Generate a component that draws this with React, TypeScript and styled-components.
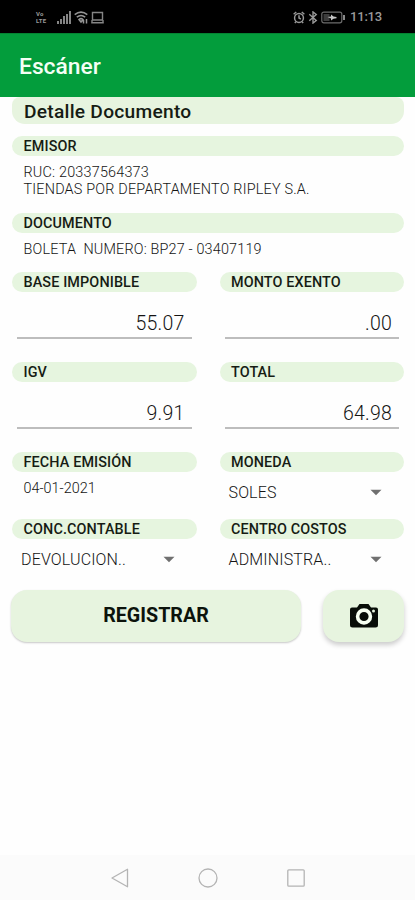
import React from 'react';
import styled, { createGlobalStyle } from 'styled-components';

const Global = createGlobalStyle`
  * { box-sizing: border-box; }
  body { margin: 0; background: #fefefe; font-family: Roboto, sans-serif; color: #161c14; }
`;

const Screen = styled.div`
  width: 415px;
  height: 900px;
  display: flex;
  flex-direction: column;
  overflow: hidden;
`;

const StatusBar = styled.header`
  height: 33px;
  flex: none;
  background: #000;
  color: #9a9a9a;
  display: flex;
  justify-content: space-between;
  align-items: center;
  padding: 1px 33px 0 36px;
`;

const StatusGroup = styled.div<{ $gap: number }>`
  display: flex;
  align-items: center;
  gap: ${(p) => p.$gap}px;
`;

const Volte = styled.div`
  display: flex;
  flex-direction: column;
  font-size: 6px;
  line-height: 7px;
  font-weight: 700;
  letter-spacing: 0.2px;
  width: 13px;
  margin-right: 5px;
`;

const Clock = styled.span`
  font-size: 13px;
  line-height: 16px;
  font-weight: 500;
  letter-spacing: -0.2px;
  margin-left: 1px;
`;

const AppBar = styled.div`
  height: 64px;
  flex: none;
  background: #039d3c;
  border-top: 1px solid #048433;
  color: #f4fff5;
  padding: 0 19px;
  font-size: 22.8px;
  font-weight: 500;
  line-height: 65px;
`;

const Content = styled.main`
  flex: 1;
  padding: 0 11px 0 12px;
`;

const Title = styled.h1`
  margin: 0 0 12px;
  height: 27px;
  border-radius: 8px 8px 13px 13px;
  background: #e7f4df;
  padding-left: 12px;
  font-size: 19.2px;
  letter-spacing: 0.25px;
  line-height: 29px;
  font-weight: 500;
`;

const Band = styled.h2`
  margin: 0;
  height: 20px;
  border-radius: 10px;
  background: #e6f5df;
  padding-left: 11.5px;
  font-size: 14.4px;
  line-height: 21px;
  font-weight: 500;
  white-space: nowrap;
  letter-spacing: 0.12px;
`;

const Section = styled.section<{ $height: number }>`
  height: ${(p) => p.$height}px;
`;

const Body = styled.p<{ $spacing?: number }>`
  margin: 0;
  padding: 8px 0 0 11.5px;
  font-size: 14.4px;
  line-height: 17px;
  font-weight: 300;
  color: #141414;
  white-space: pre;
  letter-spacing: ${(p) => p.$spacing ?? 0}px;
`;

const Grid = styled.div`
  display: grid;
  grid-template-columns: 184.5px 184.5px;
  column-gap: 23px;
  grid-template-rows: 90px 90px 67px 70.5px;
`;

const Cell = styled.section``;

const Amount = styled.div`
  margin: 17px 5px 0;
  height: 30px;
  border-bottom: 2px solid #bdbdbd;
  padding-right: 7px;
  text-align: right;
  font-size: 19.5px;
  line-height: 30px;
  font-weight: 300;
  letter-spacing: 0.2px;
  color: #141414;
`;

const Select = styled.div`
  height: 40px;
  padding: 0 22px 0 9px;
  display: flex;
  justify-content: space-between;
  align-items: center;
  font-size: 16px;
  font-weight: 300;
  letter-spacing: 0.15px;
  color: #141414;
`;

const Actions = styled.div`
  display: flex;
  justify-content: space-between;
  margin-left: -1px;
`;

const Button = styled.button<{ $width: number; $raised?: boolean }>`
  width: ${(p) => p.$width}px;
  height: 52px;
  border: 0;
  border-radius: 16px;
  padding: 1px 0 0;
  background: #e7f4df;
  color: #0c130b;
  font: 700 19.7px/54px Roboto, sans-serif;
  display: flex;
  align-items: center;
  justify-content: center;
  box-shadow: ${(p) => (p.$raised ? '0 3px 5px rgba(0,0,0,.2)' : '0 1px 2px rgba(0,0,0,.22)')};
`;

const NavBar = styled.nav`
  height: 45px;
  flex: none;
  background: #fbfbfb;
  display: flex;
  justify-content: center;
  align-items: center;
  gap: 68px;
`;

const Caret = () => (
  <svg width="12" height="7" viewBox="0 0 12 7"><path d="M.5.7h11L6 6.3z" fill="#707070" /></svg>
);

const amounts = [
  { label: 'BASE IMPONIBLE', value: '55.07' },
  { label: 'MONTO EXENTO', value: '.00' },
  { label: 'IGV', value: '9.91' },
  { label: 'TOTAL', value: '64.98' },
];

export default function App() {
  return (
    <Screen>
      <Global />
      <StatusBar>
        <StatusGroup $gap={3}>
          <Volte><span>Vo</span><span>LTE</span></Volte>
          <svg width="14" height="13" viewBox="0 0 14 13" fill="#858585">
            <path d="M0 10h2v3H0zM3 8h2v5H3zM6 5h2v8H6zM9 3h2v10H9zM12 0h2v13h-2z" />
          </svg>
          <svg width="14" height="13" viewBox="0 0 14 13" fill="none" stroke="#959595" strokeWidth="1.5">
            <path d="M.7 3.7Q7-1.5 13.3 3.7M2.8 6.2Q7 2.8 11.2 6.2M5 8.5q2-1.7 4 0L7 11zM9.5 9v3.5M12.5 8v4.5" />
          </svg>
          <svg width="13" height="13" viewBox="0 0 13 13" fill="none" stroke="#858585" strokeWidth="1.4">
            <path d="M1.5 1.5h10V9h-10zM.2 11.700h12.600M1 9v2.500M12 9v2.500" />
          </svg>
        </StatusGroup>
        <StatusGroup $gap={3}>
          <svg width="12" height="13" viewBox="0 0 13 14" fill="none" stroke="#999" strokeWidth="1.6">
            <circle cx="6.5" cy="7.5" r="4.8" /><path d="M.7 3.5 3.5 1M12.3 3.5 9.5 1M6.5 4.5v3l2 1.2M3.2 11.5 2 13M9.8 11.5 11 13" />
          </svg>
          <svg width="10" height="13" viewBox="0 0 10 14" fill="none" stroke="#999" strokeWidth="1.5">
            <path d="m1 3.5 7.5 6.7L5 13V1l3.5 2.8L1 10.5" />
          </svg>
          <svg width="25" height="13" viewBox="0 0 25 13">
            <rect x=".8" y="1.2" width="20" height="10.6" rx="2" fill="none" stroke="#6c6c6c" strokeWidth="1.2" />
            <path d="M2.5 3h6v7h-6z" fill="#3c3c3c" />
            <path d="M22 4h2v5h-2z" fill="#888" />
            <path d="M6.5 6 10 5.5v-2l2.5 2 3 .5v1.300l-3 .4L10 9.500v-2z" fill="#c4c4c4" />
          </svg>
          <Clock>11:13</Clock>
        </StatusGroup>
      </StatusBar>
      <AppBar>Escáner</AppBar>
      <Content>
        <Title>Detalle Documento</Title>
        <Section $height={76.5}>
          <Band>EMISOR</Band>
          <Body $spacing={0.2}>{'RUC: 20337564373\nTIENDAS POR DEPARTAMENTO RIPLEY S.A.'}</Body>
        </Section>
        <Section $height={59.5}>
          <Band>DOCUMENTO</Band>
          <Body $spacing={0.17}>{'BOLETA  NUMERO: BP27 - 03407119'}</Body>
        </Section>
        <Grid>
          {amounts.map((a) => (
            <Cell key={a.label}>
              <Band>{a.label}</Band>
              <Amount>{a.value}</Amount>
            </Cell>
          ))}
          <Cell>
            <Band>FECHA EMISIÓN</Band>
            <Body>04-01-2021</Body>
          </Cell>
          <Cell>
            <Band>MONEDA</Band>
            <Select>SOLES<Caret /></Select>
          </Cell>
          <Cell>
            <Band>CONC.CONTABLE</Band>
            <Select>DEVOLUCION..<Caret /></Select>
          </Cell>
          <Cell>
            <Band>CENTRO COSTOS</Band>
            <Select>ADMINISTRA..<Caret /></Select>
          </Cell>
        </Grid>
        <Actions>
          <Button $width={290}>REGISTRAR</Button>
          <Button $width={81} $raised aria-label="Cámara">
            <svg width="30" height="26" viewBox="0 0 30 26">
              <path d="M3 4.5h5L10.5 1h9L22 4.5h5q2 0 2 2V22q0 2.500-2.500 2.500h-23Q1 24.500 1 22V6.500q0-2 2-2z" fill="#080d08" />
              <circle cx="15" cy="13.5" r="6.4" fill="#080d08" stroke="#f6fff1" strokeWidth="3.6" />
              <circle cx="24.5" cy="8" r="1.5" fill="#e7f4df" />
            </svg>
          </Button>
        </Actions>
      </Content>
      <NavBar>
        <svg width="20" height="20" viewBox="0 0 20 20" fill="none" stroke="#b4b4b4" strokeWidth="1.3" strokeLinejoin="round"><path d="M17.5 1.2v17.6L2 10z" /></svg>
        <svg width="20" height="20" viewBox="0 0 20 20" fill="none" stroke="#b4b4b4" strokeWidth="1.3"><circle cx="10" cy="10" r="9" /></svg>
        <svg width="20" height="20" viewBox="0 0 20 20" fill="none" stroke="#b4b4b4" strokeWidth="1.3"><rect x="1.8" y="1.8" width="16.4" height="16.4" rx="1" /></svg>
      </NavBar>
    </Screen>
  );
}
